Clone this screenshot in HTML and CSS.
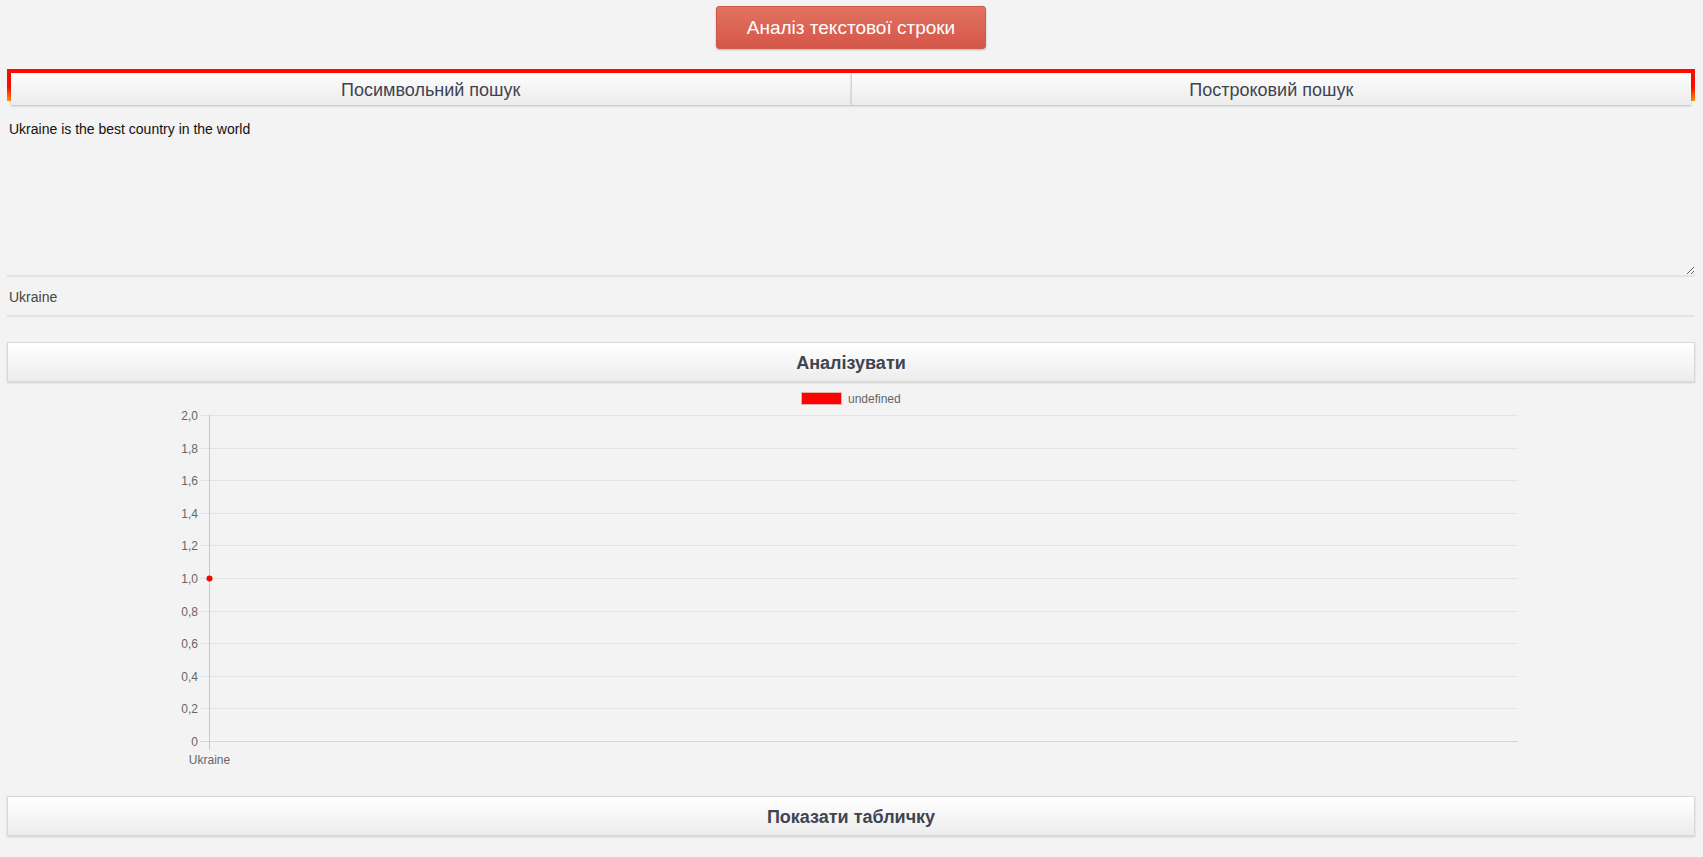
FILE: index.html
```html
<!DOCTYPE html>
<html lang="uk">
<head>
<meta charset="utf-8">
<title>Аналіз текстової строки</title>
<link rel="stylesheet" href="styles.css">
</head>
<body>
<div class="page">
  <div class="header">
    <button class="main-btn">Аналіз текстової строки</button>
  </div>
  <div class="tabs">
    <button class="tab">Посимвольний пошук</button>
    <button class="tab">Построковий пошук</button>
  </div>
  <textarea class="text-in">Ukraine is the best country in the world</textarea>
  <input class="word-in" type="text" value="Ukraine">
  <button class="wide-btn analyze">Аналізувати</button>
  <svg class="chart" width="1688" height="394" viewBox="0 0 1688 394">
    <rect x="794.5" y="10.5" width="40" height="12" fill="#ff0000" stroke="#e8b0b0" stroke-width="1"/>
    <text x="841" y="20.5" class="lbl">undefined</text>
    <g class="grid">
      <line x1="193" y1="33.5" x2="1511" y2="33.5"/>
      <line x1="193" y1="66.5" x2="1511" y2="66.5"/>
      <line x1="193" y1="98.5" x2="1511" y2="98.5"/>
      <line x1="193" y1="131.5" x2="1511" y2="131.5"/>
      <line x1="193" y1="163.5" x2="1511" y2="163.5"/>
      <line x1="193" y1="196.5" x2="1511" y2="196.5"/>
      <line x1="193" y1="229.5" x2="1511" y2="229.5"/>
      <line x1="193" y1="261.5" x2="1511" y2="261.5"/>
      <line x1="193" y1="294.5" x2="1511" y2="294.5"/>
      <line x1="193" y1="326.5" x2="1511" y2="326.5"/>
    </g>
    <line class="zero" x1="193" y1="359.5" x2="1511" y2="359.5"/>
    <line class="axis" x1="202.5" y1="33" x2="202.5" y2="368"/>
    <g class="ylbl">
      <text x="191" y="37.5">2,0</text>
      <text x="191" y="70.5">1,8</text>
      <text x="191" y="102.5">1,6</text>
      <text x="191" y="135.5">1,4</text>
      <text x="191" y="167.5">1,2</text>
      <text x="191" y="200.5">1,0</text>
      <text x="191" y="233.5">0,8</text>
      <text x="191" y="265.5">0,6</text>
      <text x="191" y="298.5">0,4</text>
      <text x="191" y="330.5">0,2</text>
      <text x="191" y="363.5">0</text>
    </g>
    <text x="202.5" y="381.5" class="lbl xlbl">Ukraine</text>
    <circle cx="202.5" cy="196.5" r="3" fill="#ff0000"/>
  </svg>
  <button class="wide-btn show-table">Показати табличку</button>
</div>
</body>
</html>
```
FILE: styles.css
```css
html, body {
  margin: 0;
  padding: 0;
  background: #f3f3f3;
}
body {
  font-family: "Liberation Sans", Arial, sans-serif;
  color: #444;
}
.page {
  padding: 0 8px 20px 7px;
  display: flex;
  flex-direction: column;
}
.header {
  display: flex;
  justify-content: center;
  padding-top: 6px;
}
.main-btn {
  width: 270px;
  height: 43px;
  border: 1px solid #cf5a4b;
  border-radius: 3px;
  background: linear-gradient(#e2735f, #d4564a);
  box-shadow: 0 1px 2px rgba(0, 0, 0, 0.25);
  color: #fff;
  font-family: "Liberation Sans", Arial, sans-serif;
  font-size: 19px;
  padding: 0;
}
.tabs {
  margin-top: 20px;
  height: 28px;
  display: flex;
  border-style: solid;
  border-width: 4px 4px 0 4px;
  border-image: linear-gradient(#ff0a00 0%, #ff0a00 50%, #ff9a00 100%) 1;
}
.tab {
  flex: 1;
  height: 32px;
  border: none;
  margin: 0;
  padding: 3px 0 0 0;
  background: linear-gradient(#fdfdfd, #ececec);
  box-shadow: 0 1px 2px rgba(0, 0, 0, 0.22);
  font-family: "Liberation Sans", Arial, sans-serif;
  font-size: 18px;
  color: #3f4450;
}
.tab + .tab {
  border-left: 1px solid #d4d4d4;
}
.text-in {
  margin: 18px 0 0 0;
  padding: 2px;
  border: none;
  border-bottom: 2px solid #e3e3e3;
  background: transparent;
  font-family: "Liberation Sans", Arial, sans-serif;
  font-size: 14px;
  line-height: 16px;
  color: #111;
  outline: none;
  box-sizing: border-box;
  height: 158px;
  width: 100%;
}
.word-in {
  margin: 0;
  padding: 12px 2px 10px 2px;
  height: 16px;
  line-height: 16px;
  border: none;
  border-bottom: 2px solid #e3e3e3;
  background: transparent;
  font-family: "Liberation Sans", Arial, sans-serif;
  font-size: 14px;
  color: #444;
  outline: none;
}
.wide-btn {
  height: 40px;
  margin: 0;
  padding: 3px 0 0 0;
  border: 1px solid #d9d9d9;
  background: linear-gradient(#ffffff, #ececec);
  box-shadow: 0 1px 2px rgba(0, 0, 0, 0.15);
  font-family: "Liberation Sans", Arial, sans-serif;
  font-weight: bold;
  font-size: 18px;
  color: #3f4450;
}
.analyze {
  margin-top: 25px;
}
.show-table {
  margin-top: 20px;
}
.chart {
  display: block;
}
.chart .lbl,
.chart .ylbl text {
  font-family: "Liberation Sans", Arial, sans-serif;
  font-size: 12px;
  fill: #666;
}
.chart .ylbl text {
  text-anchor: end;
}
.chart .xlbl {
  text-anchor: middle;
}
.chart .grid line {
  stroke: #e3e3e3;
  stroke-width: 1;
}
.chart .zero {
  stroke: #d6d6d6;
  stroke-width: 1;
}
.chart .axis {
  stroke: #c8c8c8;
  stroke-width: 1;
}
```
